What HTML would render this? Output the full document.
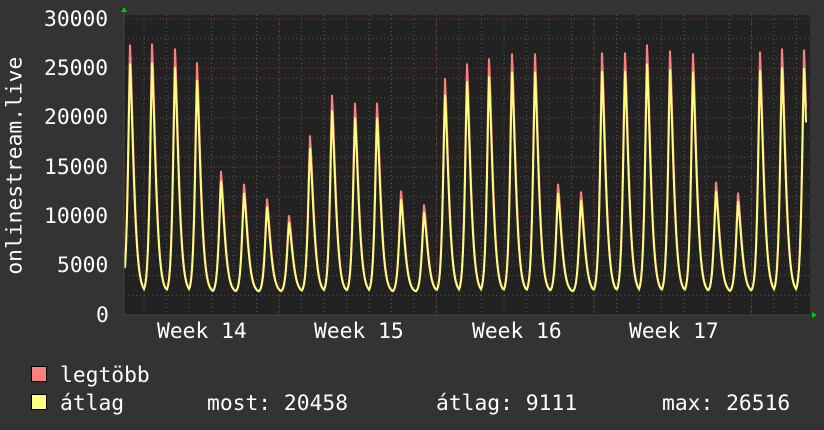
<!DOCTYPE html>
<html><head><meta charset="utf-8"><style>
body{margin:0;background:#333;width:824px;height:430px;overflow:hidden;font-family:"DejaVu Sans Mono","Liberation Mono",monospace;color:#fff}
.t{position:absolute;font-size:21.3px;white-space:pre;line-height:1}
.sq{position:absolute;width:14px;height:14px;border:1px solid #000}
</style></head><body>
<svg id="g" width="824" height="430" style="position:absolute;left:0;top:0"></svg>
<div class="t" style="left:44px;top:9px">30000</div>
<div class="t" style="left:44px;top:58px">25000</div>
<div class="t" style="left:44px;top:107px">20000</div>
<div class="t" style="left:44px;top:157px">15000</div>
<div class="t" style="left:44px;top:206px">10000</div>
<div class="t" style="left:57px;top:255px">5000</div>
<div class="t" style="left:96px;top:305px">0</div>
<div class="t" style="left:-100px;top:155px;width:230px;text-align:center;transform:rotate(-90deg)">onlinestream.live</div>
<div class="t" style="left:157px;top:321px">Week 14</div>
<div class="t" style="left:314px;top:321px">Week 15</div>
<div class="t" style="left:472px;top:321px">Week 16</div>
<div class="t" style="left:629px;top:321px">Week 17</div>
<div class="sq" style="left:31px;top:366px;background:#ff7f7f"></div>
<div class="sq" style="left:31px;top:394px;background:#ffff7f"></div>
<div class="t" style="left:60px;top:365px">legtöbb</div>
<div class="t" style="left:60px;top:393px">átlag</div>
<div class="t" style="left:207px;top:393px">most: 20458</div>
<div class="t" style="left:436px;top:393px">átlag: 9111</div>
<div class="t" style="left:662px;top:393px">max: 26516</div>
<script>
var s='',X0=124,X1=810,Y0=15,Y1=315;
function y(v){return Y1-v*300/30400;}
s+='<rect x="'+X0+'" y="'+Y0+'" width="'+(X1-X0)+'" height="'+(Y1-Y0)+'" fill="#222"/>';
for(var v=2000;v<=30000;v+=2000){if(v%5000)s+='<line x1="'+X0+'" x2="'+X1+'" y1="'+y(v)+'" y2="'+y(v)+'" stroke="#555" stroke-dasharray="1,3"/>';}
for(var x=121.5;x<X1;x+=22.5){if(x>X0)s+='<line y1="'+Y0+'" y2="'+Y1+'" x1="'+x+'" x2="'+x+'" stroke="#555" stroke-dasharray="1,3"/>';}
for(var v=5000;v<=30000;v+=5000)s+='<line x1="'+X0+'" x2="'+X1+'" y1="'+y(v)+'" y2="'+y(v)+'" stroke="#7a3a3a" stroke-dasharray="1,2"/>';
[279,436.5,594,751.5].forEach(function(x){s+='<line y1="'+Y0+'" y2="'+(Y1+3)+'" x1="'+x+'" x2="'+x+'" stroke="#7a3a3a" stroke-dasharray="1,2"/>';});
var pk=[[130,27400],[152,27500],[175,27000],[197,25600],[221,14600],[244,13300],[267,11800],[289,10100],[310,18200],[332,22300],[355,21500],[377,21500],[401,12600],[424,11200],[445,24000],[467,25500],[489,26000],[512,26500],[535,26500],[558,13300],[581,12500],[602,26600],[625,26600],[647,27400],[670,26800],[693,26500],[716,13500],[738,12400],[760,26700],[782,27000],[804,26900]];
function val(x,k){var best=2300;for(var i=0;i<pk.length;i++){var d=x-pk[i][0];var w=d<0?2.8:5;var f=Math.exp(-Math.pow(Math.abs(d)/w,1.4));var b=2300+(pk[i][1]*k-2300)*f;if(b>best)best=b;}return best;}
var pr='',py='';
for(var x=X0+1;x<=806;x+=1){pr+=x+','+y(val(x,1)).toFixed(1)+' ';py+=x+','+y(val(x,0.93)).toFixed(1)+' ';}
s+='<polyline points="'+pr+'" fill="none" stroke="#ff7f7f" stroke-width="2"/>';
s+='<polyline points="'+py+'" fill="none" stroke="#ffff7f" stroke-width="2"/>';
s+='<line x1="'+X0+'" x2="'+(X1+2)+'" y1="'+Y1+'" y2="'+Y1+'" stroke="#444"/>';
s+='<line x1="'+X0+'" x2="'+X0+'" y1="'+(Y0-3)+'" y2="'+Y1+'" stroke="#444"/>';
s+='<polygon points="121,12 124,7 127,12" fill="#0c0"/>';
s+='<polygon points="812,312 817,315 812,318" fill="#0c0"/>';
document.getElementById('g').innerHTML=s;
</script>
</body></html>
